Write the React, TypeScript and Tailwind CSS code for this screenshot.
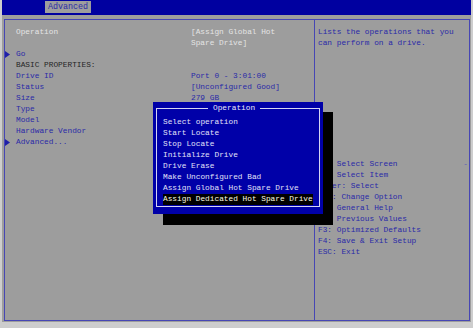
import React from "react";

const mono = { fontFamily: '"Liberation Mono", "DejaVu Sans Mono", monospace' };

function Arrow() {
  return (
    <svg width="5" height="7" viewBox="0 0 5 7" className="mt-[2px]">
      <path d="M0 0 L5 3.5 L0 7 Z" fill="#2020a8" />
    </svg>
  );
}

type Row = { arrow?: boolean; label: string; value?: string; lc?: string; vc?: string };

const rows: Row[] = [
  { label: "Operation", value: "[Assign Global Hot", lc: "text-[#e4e4e4]", vc: "text-[#e4e4e4]" },
  { label: "", value: "Spare Drive]", vc: "text-[#e4e4e4]" },
  { arrow: true, label: "Go" },
  { label: "BASIC PROPERTIES:", lc: "text-[#262626]" },
  { label: "Drive ID", value: "Port 0 - 3:01:00" },
  { label: "Status", value: "[Unconfigured Good]" },
  { label: "Size", value: "279 GB" },
  { label: "Type", value: "SAS" },
  { label: "Model", value: "" },
  { label: "Hardware Vendor", value: "" },
  { arrow: true, label: "Advanced..." },
];

const help = [
  "\u2192\u2190: Select Screen",
  "\u2191\u2193: Select Item",
  "Enter: Select",
  "+/-: Change Option",
  "F1: General Help",
  "F2: Previous Values",
  "F3: Optimized Defaults",
  "F4: Save & Exit Setup",
  "ESC: Exit",
];

const ops = [
  "Select operation",
  "Start Locate",
  "Stop Locate",
  "Initialize Drive",
  "Drive Erase",
  "Make Unconfigured Bad",
  "Assign Global Hot Spare Drive",
  "Assign Dedicated Hot Spare Drive",
];

export default function App() {
  return (
    <div className="w-[473px] h-[328px] bg-[#cdcdcd] overflow-hidden" style={mono}>
      <div className="ml-[2px] w-[469px] h-[322px] bg-[#9d9d9d] relative flex flex-col text-[7.8px] leading-[11px]">
        {/* top bar */}
        <div className="h-[15px] bg-[#0000a0] flex items-start">
          <div className="ml-[43px] mt-[1px] w-[46px] h-[12px] bg-[#9d9d9d] text-[#2a2aa8] text-[8.4px] leading-[13px] text-center">
            Advanced
          </div>
        </div>
        {/* frame */}
        <div className="mt-[4px] ml-[2px] w-[466px] h-[302px] border border-[#4646b4] flex">
          <div className="w-[310px] border-r border-[#4646b4] pt-[7px]">
            {rows.map((r, i) => (
              <div key={i} className="flex h-[11px]">
                <div className="w-[11px] flex items-start">{r.arrow ? <Arrow /> : null}</div>
                <div className={`w-[175px] whitespace-pre ${r.lc ?? "text-[#2a2aa8]"}`}>{r.label}</div>
                <div className={`whitespace-pre ${r.vc ?? "text-[#2a2aa8]"}`}>{r.value}</div>
              </div>
            ))}
          </div>
          <div className="flex-1 pt-[7px] pl-[3px] text-[#2a2aa8] whitespace-pre">
            <div className="h-[11px]">Lists the operations that you</div>
            <div className="h-[11px]">can perform on a drive.</div>
            <div className="h-[110px]" />
            {help.map((h, i) => (
              <div key={i} className="h-[11px] flex justify-between pr-[1px]">
                <span>{h}</span>
                {i === 0 ? <span className="text-[#5a5ab8]">-</span> : null}
              </div>
            ))}
          </div>
        </div>

        {/* popup shadow */}
        <div className="absolute left-[161px] top-[112px] w-[170px] h-[113px] bg-black" />
        {/* popup */}
        <div className="absolute left-[151px] top-[102px] w-[170px] h-[112px] bg-[#0000a8]">
          <div className="absolute left-[3px] top-[6px] right-[3px] bottom-[7px] border border-[#d4d4f4]" />
          <div className="absolute left-[55px] top-[1px] px-[5px] bg-[#0000a8] text-[#e8e8f8] leading-[11px]">
            Operation
          </div>
          <div className="absolute left-[10px] top-[15px] text-[#e0e0f8] whitespace-pre">
            {ops.map((o, i) => (
              <div key={i} className="h-[11px]">
                {i === ops.length - 1 ? (
                  <span className="bg-black text-[#fbfbe4] inline-block h-[11px]">{o}</span>
                ) : (
                  o
                )}
              </div>
            ))}
          </div>
        </div>
      </div>
    </div>
  );
}
